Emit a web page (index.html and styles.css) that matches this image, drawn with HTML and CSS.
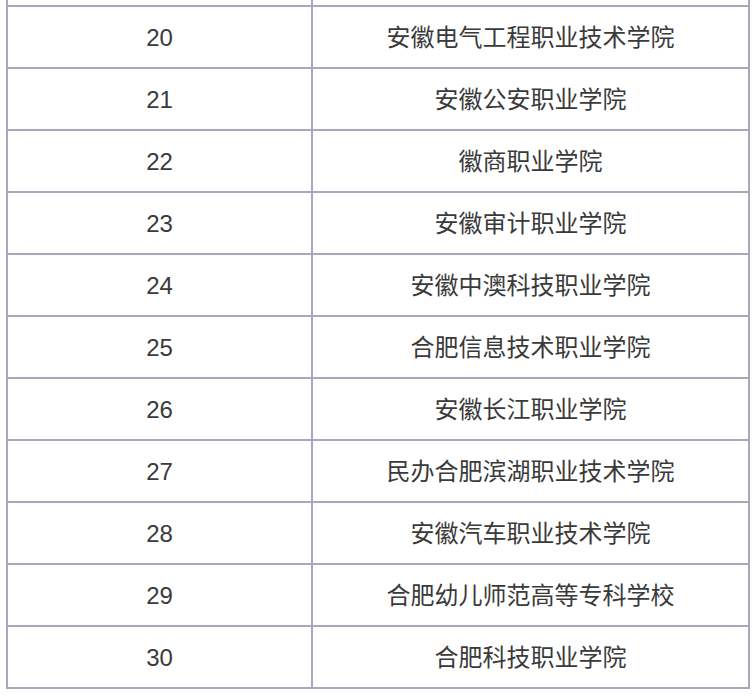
FILE: index.html
```html
<!DOCTYPE html>
<html lang="zh-CN">
<head>
<meta charset="utf-8">
<title>院校列表</title>
<link rel="stylesheet" href="styles.css">
</head>
<body>
<table class="list">
  <colgroup><col class="c-num"><col class="c-name"></colgroup>
  <tbody>
    <tr class="spacer"><td></td><td></td></tr>
    <tr><td>20</td><td>安徽电气工程职业技术学院</td></tr>
    <tr><td>21</td><td>安徽公安职业学院</td></tr>
    <tr><td>22</td><td>徽商职业学院</td></tr>
    <tr><td>23</td><td>安徽审计职业学院</td></tr>
    <tr><td>24</td><td>安徽中澳科技职业学院</td></tr>
    <tr><td>25</td><td>合肥信息技术职业学院</td></tr>
    <tr><td>26</td><td>安徽长江职业学院</td></tr>
    <tr><td>27</td><td>民办合肥滨湖职业技术学院</td></tr>
    <tr><td>28</td><td>安徽汽车职业技术学院</td></tr>
    <tr><td>29</td><td>合肥幼儿师范高等专科学校</td></tr>
    <tr><td>30</td><td>合肥科技职业学院</td></tr>
  </tbody>
</table>
</body>
</html>
```
FILE: styles.css
```css
html, body {
  margin: 0;
  padding: 0;
  background: #ffffff;
}
.list {
  margin-left: 6px;
  border-collapse: separate;
  border-spacing: 0;
  table-layout: fixed;
  width: 744px;
  border-left: 2px solid #a9a7bd;
  font-family: "Liberation Sans", "Noto Sans CJK SC", sans-serif;
  font-size: 24px;
  color: #3a3a3a;
}
.c-num { width: 305px; }
.c-name { width: 437px; }
.list td {
  height: 58px;
  padding: 2px 0 0;
  text-align: center;
  vertical-align: middle;
  border-right: 2px solid #a9a7bd;
  border-bottom: 2px solid #a9a7bd;
  line-height: 1;
}
.list tr.spacer td {
  height: 5px;
  padding: 0;
  font-size: 0;
  line-height: 0;
}
```
